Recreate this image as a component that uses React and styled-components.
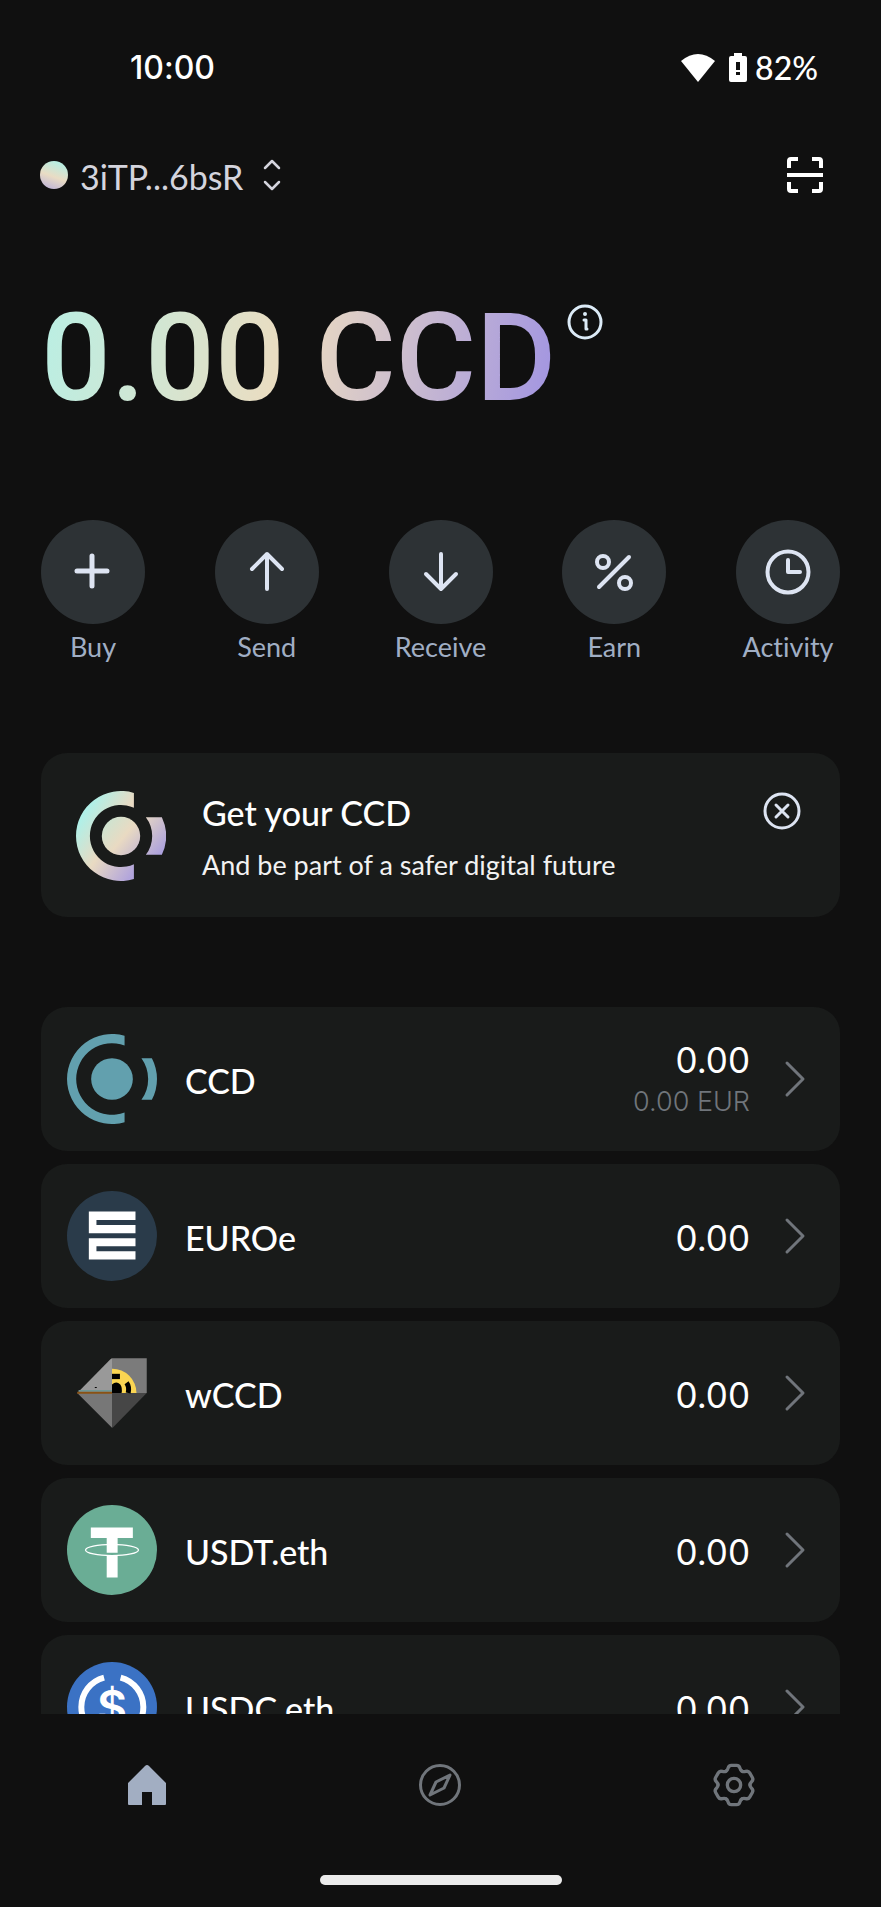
import React from "react";
import styled, { createGlobalStyle, css } from "styled-components";

const color = {
  page: "#101010",
  card: "#191b1a",
  circle: "#2d3235",
  label: "#a0aec4",
  icon: "#dde4f2",
  muted: "#70757b",
  account: "#d4d4dd",
};

const textFont = `Lato, "Open Sans", sans-serif`;
const figureFont = `Inter, Roboto, sans-serif`;

const GlobalStyle = createGlobalStyle`
  *, *::before, *::after { box-sizing: border-box; }
  body { margin: 0; background: ${color.page}; }
`;

const Screen = styled.div`
  display: flex;
  flex-direction: column;
  height: 100vh;
  background: ${color.page};
  color: #fff;
  font-family: ${textFont};
  font-variant-ligatures: none;
`;

const plainButton = css`
  display: flex;
  align-items: center;
  padding: 0;
  border: 0;
  background: none;
  color: inherit;
  font: inherit;
  font-variant-ligatures: none;
  cursor: pointer;
`;

const StatusBar = styled.div`
  flex: none;
  display: flex;
  align-items: center;
  justify-content: space-between;
  height: 136px;
  padding: 0 63px 0 130px;
  font-size: 32px;
  line-height: 40px;
  font-weight: 500;
`;

const Clock = styled.time`
  font-family: ${figureFont};
`;

const StatusIcons = styled.div`
  display: flex;
  align-items: center;
`;

const WifiIcon = styled.svg`
  margin-right: 14px;
`;

const BatteryIcon = styled.svg`
  margin-right: 8px;
`;

const Header = styled.header`
  flex: none;
  display: flex;
  align-items: center;
  justify-content: space-between;
  height: 78px;
  padding: 0 54px 0 40px;
`;

const AccountButton = styled.button`
  ${plainButton}
  color: ${color.account};
  font-size: 34px;
  line-height: 40px;
`;

const AccountDot = styled.span`
  width: 28px;
  height: 28px;
  margin-right: 12px;
  border-radius: 50%;
  background: linear-gradient(200deg, #b4efe4 10%, #e9dcc4 55%, #b8addb 100%);
`;

const AccountName = styled.span`
  margin-right: 19px;
  padding-top: 3px;
`;

const IconButton = styled.button`
  ${plainButton}
  flex: none;
  align-self: ${(p) => p.$align || "center"};
  justify-content: center;
  width: 44px;
  height: 44px;
  color: ${(p) => p.$tone || "#fff"};
`;

const Content = styled.main`
  flex: 1;
  min-height: 0;
  padding: 0 41px;
  overflow-y: auto;
  scrollbar-width: none;
`;

const Balance = styled.section`
  display: flex;
  padding-top: 82px;
`;

const BalanceText = styled.h1`
  margin: 0;
  background: linear-gradient(100deg, #b9efe4 0%, #ecdcc0 48%, #a093e2 100%);
  background-clip: text;
  -webkit-background-clip: text;
  color: transparent;
  font: 500 123px/124px Roboto, sans-serif;
`;

const InfoButton = styled(IconButton)`
  margin: 4px 0 0 7px;
`;

const Actions = styled.nav`
  display: flex;
  justify-content: space-between;
  margin-top: 100px;
`;

const ActionButton = styled.button`
  ${plainButton}
  flex-direction: column;
  width: 104px;
  color: ${color.label};
  font-size: 27px;
  line-height: 46px;
`;

const ActionCircle = styled.span`
  display: flex;
  align-items: center;
  justify-content: center;
  width: 104px;
  height: 104px;
  border-radius: 50%;
  background: ${color.circle};
  color: ${color.icon};
`;

const Banner = styled.section`
  display: flex;
  align-items: center;
  gap: 36px;
  margin-top: 83px;
  padding: 36px 36px 34px 35px;
  border-radius: 26px;
  background: ${color.card};
`;

const BannerBody = styled.div`
  flex: 1;
`;

const BannerTitle = styled.h2`
  margin: 0;
  font-size: 34px;
  line-height: 48px;
  font-weight: 500;
`;

const BannerText = styled.p`
  margin: 10px 0 0;
  color: #f2f2f2;
  font-size: 27px;
  line-height: 36px;
`;

const TokenList = styled.ul`
  display: flex;
  flex-direction: column;
  gap: 13px;
  margin: 90px 0 0;
  padding: 0;
  list-style: none;
`;

const TokenRow = styled.button`
  ${plainButton}
  width: 100%;
  height: 144px;
  padding: 0 33px 0 26px;
  border-radius: 26px;
  background: ${color.card};
  font-size: 34px;
  line-height: 42px;
`;

const TokenName = styled.span`
  flex: 1;
  margin-left: 28px;
  padding-top: 3px;
  font-weight: 500;
  text-align: left;
`;

const TokenAmounts = styled.span`
  display: flex;
  flex-direction: column;
  margin-right: 33px;
  padding-top: 4px;
  font-family: ${figureFont};
  font-size: 35px;
  text-align: right;
`;

const FiatAmount = styled.span`
  color: ${color.muted};
  font-size: 27px;
  font-weight: 300;
`;

const TabBar = styled.nav`
  flex: none;
  display: grid;
  grid-template-columns: repeat(3, 1fr);
  height: 142px;
`;

const Tab = styled.a`
  display: flex;
  align-items: center;
  justify-content: center;
  color: ${(p) => (p.$active ? "#a2aec2" : color.muted)};
`;

const HomeIndicator = styled.div`
  flex: none;
  align-self: center;
  width: 242px;
  height: 10px;
  margin: 19px 0 22px;
  border-radius: 5px;
  background: #ebebeb;
`;

function Stroke({ size = 44, width = 3, children }) {
  return (
    <svg width={size} height={size} viewBox={`0 0 ${size} ${size}`} fill="none" stroke="currentColor" strokeWidth={width} strokeLinecap="round" strokeLinejoin="round" aria-hidden="true">
      {children}
    </svg>
  );
}

const PlusIcon = () => (
  <Stroke width={5}><path d="M21 6V36M6 21H36" /></Stroke>
);
const UpIcon = () => (
  <Stroke width={4}><path d="M22 39V4M7 19L22 4L37 19" /></Stroke>
);
const DownIcon = () => (
  <Stroke width={4}><path d="M22 4V39M7 24L22 39L37 24" /></Stroke>
);
const PercentIcon = () => (
  <Stroke width={4}><path d="M7 37L37 7" /><circle cx="11" cy="12" r="6" /><circle cx="33" cy="33" r="6" /></Stroke>
);
const ClockIcon = () => (
  <Stroke size={48} width={4}><circle cx="24" cy="24" r="20.5" /><path d="M24 12V24H36" /></Stroke>
);

const GearIcon = () => (
  <svg width="44" height="44" viewBox="-66 -66 132 132" fill="none" stroke="currentColor" strokeWidth="10" strokeLinecap="round" aria-hidden="true">
    {[0, 60, 120, 180, 240, 300].map((angle) => (
      <path key={angle} transform={`rotate(${angle})`} d="M-24 -41.6C-14 -46 -22 -59 -8 -59H8C22 -59 14 -46 24 -41.6" />
    ))}
    <circle r="20" />
  </svg>
);

const BannerLogo = () => (
  <svg width="90" height="90" viewBox="-136 -136 272 272" aria-hidden="true">
    <defs>
      <linearGradient id="ring" x1="0" y1="0" x2="1" y2="1">
        <stop offset="0.2" stopColor="#b0f0e8" />
        <stop offset="0.55" stopColor="#e9dac2" />
        <stop offset="0.95" stopColor="#b1a4dc" />
      </linearGradient>
      <linearGradient id="core" gradientUnits="userSpaceOnUse" x1="-80" y1="-80" x2="105" y2="75">
        <stop offset="0" stopColor="#b9ebdc" />
        <stop offset="0.5" stopColor="#e9dac2" />
        <stop offset="1" stopColor="#aba0dd" />
      </linearGradient>
    </defs>
    <path fill="url(#ring)" d="M39 -130.3A136 136 0 1 0 39 130.3V85.5A94 94 0 1 1 39 -85.5Z" />
    <circle r="58" fill="url(#core)" />
    <path fill="url(#core)" d="M75 -57H123.5A136 136 0 0 1 123.5 57H75A94 94 0 0 0 75 -57Z" />
  </svg>
);

const TokenSvg = ({ children }) => (
  <svg width="90" height="90" viewBox="-136 -136 272 272" aria-hidden="true">{children}</svg>
);

const CcdLogo = () => (
  <TokenSvg>
    <g fill="#62a0ae">
      <path d="M38 -130.6A136 136 0 1 0 38 130.6V101A108 108 0 1 1 38 -101Z" />
      <circle r="63" />
      <path d="M89 -63H120.5A136 136 0 0 1 120.5 63H89A108 108 0 0 0 89 -63Z" />
    </g>
  </TokenSvg>
);

const EuroeLogo = () => (
  <TokenSvg>
    <circle r="136" fill="#2a3b4a" />
    <path fill="#fff" d="M-70 -74H71V-48H-47V-33H71V-8H-70ZM-70 7H71V31H-47V46H71V71H-70Z" />
  </TokenSvg>
);

const WccdLogo = () => (
  <TokenSvg>
    <path fill="#999" d="M-105 0L-4 -103L0 -105V0Z" />
    <path fill="#7b7b7b" d="M0 -105H105V0H0Z" />
    <path fill="#777" d="M-105 0H0V105Z" />
    <path fill="#464646" d="M0 0H105L2 105H0Z" />
    <path fill="#fad552" d="M0 -73A73 73 0 0 1 74 0H0Z" />
    <path d="M0 -58H24V-42H0Z" />
    <path d="M0 -26Q13 -38 25 -26Q32 -16 29 0H0Z" />
    <path fill="none" stroke="#000" strokeWidth="15" d="M44 -31Q53 -19 49 0" />
    <path fill="#6f9694" d="M-101 -9H0V-4H-101Z" />
    <path fill="#8a5214" d="M-105 -4H0V2H-105Z" />
    <path d="M-52 -18H-46V-15H-52Z" />
  </TokenSvg>
);

const UsdtLogo = () => (
  <TokenSvg>
    <circle r="136" fill="#6aad95" />
    <ellipse cy="0" rx="80" ry="17" fill="none" stroke="#fff" strokeWidth="4" />
    <path fill="#fff" d="M-64 -68H63V-36H17V8H-16V-36H-64ZM-16 15H17V83H-16Z" />
  </TokenSvg>
);

const DollarSign = styled.text`
  fill: #fff;
  font: 600 140px ${figureFont};
  text-anchor: middle;
`;

const UsdcLogo = () => (
  <TokenSvg>
    <circle r="136" fill="#3b72c4" />
    <g fill="none" stroke="#fff" strokeWidth="18">
      <path d="M-24 -89A92 92 0 0 0 -24 89" />
      <path d="M26 -89A92 92 0 0 1 26 89" />
    </g>
    <DollarSign y="52">$</DollarSign>
  </TokenSvg>
);

const actions = [
  ["Buy", PlusIcon],
  ["Send", UpIcon],
  ["Receive", DownIcon],
  ["Earn", PercentIcon],
  ["Activity", ClockIcon],
];

const tokens = [
  { name: "CCD", Logo: CcdLogo, amount: "0.00", fiat: "0.00 EUR" },
  { name: "EUROe", Logo: EuroeLogo, amount: "0.00" },
  { name: "wCCD", Logo: WccdLogo, amount: "0.00" },
  { name: "USDT.eth", Logo: UsdtLogo, amount: "0.00" },
  { name: "USDC.eth", Logo: UsdcLogo, amount: "0.00" },
];

export default function App() {
  return (
    <Screen>
      <GlobalStyle />
      <StatusBar>
        <Clock>10:00</Clock>
        <StatusIcons>
          <WifiIcon width="34" height="28" viewBox="0 0 34 28" fill="#fff" aria-hidden="true">
            <path d="M0 7Q17 -7 34 7L17 28Z" />
          </WifiIcon>
          <BatteryIcon width="18" height="30" viewBox="0 0 18 30" aria-hidden="true">
            <path fill="#fff" d="M5 0H13V3H16Q18 3 18 5V27Q18 29 16 29H2Q0 29 0 27V5Q0 3 2 3H5Z" />
            <path fill={color.page} d="M7 9H11V17H7ZM7 19H11V22H7Z" />
          </BatteryIcon>
          <span>82%</span>
        </StatusIcons>
      </StatusBar>

      <Header>
        <AccountButton aria-label="Switch account">
          <AccountDot />
          <AccountName>3iTP...6bsR</AccountName>
          <svg width="20" height="32" viewBox="0 0 20 32" fill="none" stroke="currentColor" strokeWidth="2.5" strokeLinecap="round" strokeLinejoin="round" aria-hidden="true">
            <path d="M3 9L10 2L17 9M3 23L10 30L17 23" />
          </svg>
        </AccountButton>
        <IconButton aria-label="Scan">
          <svg width="38" height="38" viewBox="0 0 38 38" fill="none" stroke="currentColor" strokeWidth="4" aria-hidden="true">
            <path d="M3 12V5Q3 3 5 3H12M26 3H33Q35 3 35 5V12M35 26V33Q35 35 33 35H26M12 35H5Q3 35 3 33V26M1 19H37" />
          </svg>
        </IconButton>
      </Header>

      <Content>
        <Balance>
          <BalanceText>0.00 CCD</BalanceText>
          <InfoButton aria-label="About balance" $tone="#dcebf7" $align="flex-start">
            <Stroke>
              <circle cx="22" cy="22" r="16" />
              <path d="M21 20H23V29H24" />
              <circle cx="22" cy="14" r="1" strokeWidth="2" fill="currentColor" />
            </Stroke>
          </InfoButton>
        </Balance>

        <Actions>
          {actions.map(([label, Icon]) => (
            <ActionButton key={label}>
              <ActionCircle><Icon /></ActionCircle>
              {label}
            </ActionButton>
          ))}
        </Actions>

        <Banner>
          <BannerLogo />
          <BannerBody>
            <BannerTitle>Get your CCD</BannerTitle>
            <BannerText>And be part of a safer digital future</BannerText>
          </BannerBody>
          <IconButton aria-label="Dismiss" $tone={color.icon} $align="flex-start">
            <Stroke><circle cx="22" cy="22" r="17" /><path d="M16 16L28 28M28 16L16 28" /></Stroke>
          </IconButton>
        </Banner>

        <TokenList>
          {tokens.map(({ name, Logo, amount, fiat }) => (
            <li key={name}>
              <TokenRow>
                <Logo />
                <TokenName>{name}</TokenName>
                <TokenAmounts>
                  {amount}
                  {fiat && <FiatAmount>{fiat}</FiatAmount>}
                </TokenAmounts>
                <svg width="24" height="40" viewBox="0 0 24 40" fill="none" stroke={color.muted} strokeWidth="3" strokeLinecap="round" strokeLinejoin="round" aria-hidden="true">
                  <path d="M4 4L20 20L4 36" />
                </svg>
              </TokenRow>
            </li>
          ))}
        </TokenList>
      </Content>

      <TabBar>
        <Tab href="#home" aria-label="Home" $active>
          <svg width="40" height="42" viewBox="0 0 40 42" fill="currentColor" aria-hidden="true">
            <path d="M1 19L18 2Q20 0 22 2L39 19V40Q39 41 38 41H25V28H15V41H2Q1 41 1 40Z" />
          </svg>
        </Tab>
        <Tab href="#discover" aria-label="Discover">
          <Stroke>
            <circle cx="22" cy="22" r="19.5" />
            <path d="M32 12L26 25L12 32L18 19Z" />
          </Stroke>
        </Tab>
        <Tab href="#settings" aria-label="Settings"><GearIcon /></Tab>
      </TabBar>
      <HomeIndicator />
    </Screen>
  );
}
